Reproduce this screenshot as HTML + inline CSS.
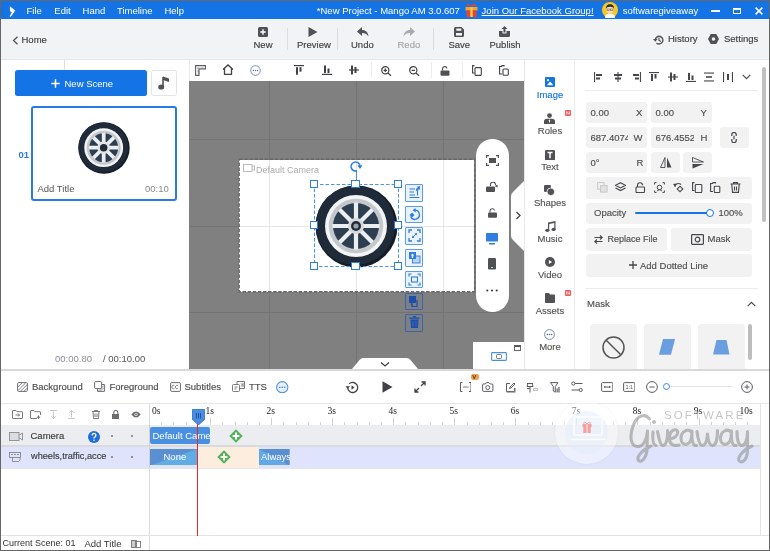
<!DOCTYPE html>
<html><head><meta charset="utf-8">
<style>
*{box-sizing:border-box;margin:0;padding:0}
html,body{will-change:transform;width:770px;height:551px;overflow:hidden;background:#fff;font-family:"Liberation Sans",sans-serif;}
.a{position:absolute}
#frame{position:absolute;left:0;top:0;width:770px;height:551px;border:1px solid #666}
#title{left:1px;top:1px;width:768px;height:18px;background:#1474e6;color:#fff;font-size:9.5px}
#title .t{position:absolute;top:4px;white-space:nowrap}
#tb{left:1px;top:19px;width:768px;height:41px;background:#f2f3f5;border-bottom:1px solid #e6e7ea}
.tbtn{position:absolute;top:22px;font-size:9.5px;color:#3f3f3f;white-space:nowrap}
.sep{position:absolute;width:1px;background:#dcdde0}
.tbtn,.ft,.tt,.tab{-webkit-text-stroke:0.15px currentColor}
</style></head><body>
<div id="frame"></div>
<!-- title bar -->
<div id="title" class="a">
  <svg class="a" style="left:7.5px;top:4.5px" width="7" height="11" viewBox="0 0 7 11"><path d="M0.8 0.3L6.3 4.6L1.8 10.8L0.6 10.2L2.8 6.3L1 5.2Z" fill="#fff"/></svg>
  <span class="t" style="left:25.5px">File</span>
  <span class="t" style="left:53.3px">Edit</span>
  <span class="t" style="left:81.6px">Hand</span>
  <span class="t" style="left:116px">Timeline</span>
  <span class="t" style="left:163.4px">Help</span>
  <span class="t" style="left:315.8px">*New Project - Mango AM 3.0.607</span>
  <span class="t" style="left:480.6px;text-decoration:underline">Join Our Facebook Group!</span>
  <span class="t" style="left:621.7px">softwaregiveaway</span>
</div>
<!-- title icons -->
<svg class="a" style="left:465px;top:3px" width="13" height="14" viewBox="0 0 13 14"><rect x="0.5" y="4" width="12" height="3.5" fill="#f4a42a"/><rect x="1.5" y="7.5" width="10" height="6.5" fill="#e8452c"/><rect x="5.3" y="4" width="2.4" height="10" fill="#f7c64a"/><path d="M6.5 4C4 0 1.5 1 3 3.5M6.5 4C9 0 11.5 1 10 3.5" fill="none" stroke="#e8452c" stroke-width="1.2"/></svg>
<svg class="a" style="left:601.5px;top:2px" width="16" height="16" viewBox="0 0 16 16"><circle cx="8" cy="8" r="8" fill="#f7c81e"/><path d="M3 16Q3 11.5 8 11.5Q13 11.5 13 16Z" fill="#fff"/><ellipse cx="8" cy="7.5" rx="3.6" ry="4" fill="#fbd9b5"/><path d="M4 6.5Q4 2.2 8 2.2Q12 2.2 12 6.5Q11 4.5 8 4.8Q5 4.5 4 6.5Z" fill="#2a2a2a"/><rect x="5" y="7" width="2.4" height="1.6" fill="none" stroke="#555" stroke-width="0.5"/><rect x="8.6" y="7" width="2.4" height="1.6" fill="none" stroke="#555" stroke-width="0.5"/></svg>
<div class="a" style="left:711px;top:10px;width:8.5px;height:1.6px;background:#fff"></div>
<div class="a" style="left:733px;top:7.5px;width:7.5px;height:6px;border:1.4px solid #fff;border-top-width:2px"></div>
<svg class="a" style="left:754.5px;top:7px" width="8" height="8" viewBox="0 0 8 8"><path d="M0.6 0.6L7.4 7.4M7.4 0.6L0.6 7.4" stroke="#fff" stroke-width="1.5"/></svg>
<!-- toolbar -->
<div id="tb" class="a"></div>
<!-- toolbar content -->
<svg class="a" style="left:12px;top:36px" width="7" height="9" viewBox="0 0 7 9"><path d="M5.5 0.7 L1.5 4.5 L5.5 8.3" fill="none" stroke="#555" stroke-width="1.3"/></svg>
<span class="tbtn" style="left:21.5px;top:33.5px">Home</span>
<!-- New -->
<svg class="a" style="left:258px;top:27px" width="10" height="10" viewBox="0 0 10 10"><rect x="0" y="0" width="10" height="10" rx="1.5" fill="#4f5154"/><path d="M5 2.3V7.7M2.3 5H7.7" stroke="#fff" stroke-width="1.4"/></svg>
<span class="tbtn" style="left:253.5px;top:38.7px">New</span>
<div class="sep" style="left:287px;top:28px;height:22px"></div>
<svg class="a" style="left:308px;top:27px" width="10" height="10" viewBox="0 0 10 10"><path d="M0.5 0 L9.5 5 L0.5 10Z" fill="#4f5154"/></svg>
<span class="tbtn" style="left:297px;top:38.7px">Preview</span>
<div class="sep" style="left:337px;top:28px;height:22px"></div>
<svg class="a" style="left:357px;top:27px" width="12" height="10" viewBox="0 0 12 10"><path d="M5 0 L0 4.5 L5 9 V6 C8 6 10 7 11.5 9.5 C11 5.5 9 3 5 3Z" fill="#4f5154"/></svg>
<span class="tbtn" style="left:351px;top:38.7px">Undo</span>
<svg class="a" style="left:403px;top:27px" width="12" height="10" viewBox="0 0 12 10"><path d="M7 0 L12 4.5 L7 9 V6 C4 6 2 7 0.5 9.5 C1 5.5 3 3 7 3Z" fill="#a9aaad"/></svg>
<span class="tbtn" style="left:397.5px;top:38.7px;color:#a5a6a8">Redo</span>
<div class="sep" style="left:433px;top:28px;height:22px"></div>
<svg class="a" style="left:453.5px;top:27px" width="10" height="10" viewBox="0 0 10 10"><path d="M1.5 0H7.5L10 2.5V8.5A1.5 1.5 0 0 1 8.5 10H1.5A1.5 1.5 0 0 1 0 8.5V1.5A1.5 1.5 0 0 1 1.5 0Z" fill="#4f5154"/><rect x="2.3" y="1.5" width="5" height="2.3" fill="#f2f3f5"/><rect x="2" y="6" width="6" height="2.6" fill="#f2f3f5"/></svg>
<span class="tbtn" style="left:448.5px;top:39.3px">Save</span>
<svg class="a" style="left:499px;top:26px" width="11" height="11" viewBox="0 0 11 11"><path d="M5.5 0 L8.5 3 H6.5 V6.5 H4.5 V3 H2.5Z" fill="#4f5154"/><path d="M0 5 H3.5 V7.5 H7.5 V5 H11 V9.5 A1.5 1.5 0 0 1 9.5 11 H1.5 A1.5 1.5 0 0 1 0 9.5Z" fill="#4f5154"/></svg>
<span class="tbtn" style="left:489.5px;top:38.7px">Publish</span>
<svg class="a" style="left:653px;top:34.5px" width="11" height="10" viewBox="0 0 11 10"><path d="M2.3 5 A3.8 3.8 0 1 1 3.5 7.9" fill="none" stroke="#4f5154" stroke-width="1.4"/><path d="M0 4 L2.3 6.8 L4.6 4Z" fill="#4f5154"/><path d="M6 2.8 V5.3 L7.8 6.6" fill="none" stroke="#4f5154" stroke-width="1.2"/></svg>
<span class="tbtn" style="left:668px;top:33px">History</span>
<svg class="a" style="left:708px;top:34px" width="11" height="10" viewBox="0 0 11 10"><path d="M2.75 0H8.25L11 5L8.25 10H2.75L0 5Z" fill="#4f5154"/><circle cx="5.5" cy="5" r="1.8" fill="#f2f3f5"/></svg>
<span class="tbtn" style="left:724px;top:33px">Settings</span>
<!-- ===== MAIN ===== -->

<!-- left panel -->
<div class="a" style="left:15px;top:70px;width:132px;height:26px;background:#1474e6;border-radius:2.5px"></div>
<svg class="a" style="left:51px;top:79px" width="9" height="9" viewBox="0 0 9 9"><path d="M4.5 0.3V8.7M0.3 4.5H8.7" stroke="#fff" stroke-width="1.5"/></svg>
<span class="a" style="left:64.5px;top:78px;font-size:9.5px;color:#fff;white-space:nowrap">New Scene</span>
<div class="a" style="left:151px;top:70px;width:26px;height:26px;border:1px solid #e3e4e6;border-radius:2.5px;background:#fff"></div>
<svg class="a" style="left:158px;top:76px" width="12" height="14" viewBox="0 0 12 14"><path d="M5 1V10.5" stroke="#505256" stroke-width="1.6"/><path d="M5 0.5 L11 2.5 V6 L5 4Z" fill="#505256"/><ellipse cx="3.2" cy="11" rx="3" ry="2.6" fill="#505256"/></svg>
<span class="a" style="left:18.5px;top:149px;font-size:9.5px;font-weight:bold;color:#2a78e0;white-space:nowrap">01</span>
<div class="a" style="left:31px;top:106px;width:146px;height:95px;border:2px solid #2a7ae6;border-radius:3px;background:#fff"></div>
<svg class="a" style="left:78px;top:121.5px" width="52" height="52" viewBox="-41.5 -41.5 83 83">
   <circle cx="0" cy="0" r="41" fill="#141c25"/>
   <circle cx="-1.2" cy="-1.2" r="39.6" fill="#1f2b38"/>
   <circle cx="-0.5" cy="-0.5" r="31" fill="#f2f4f5"/>
   <circle cx="-0.5" cy="-0.5" r="27.2" fill="#c3c8cc"/>
   <circle cx="-0.5" cy="-0.5" r="23" fill="#2d3e50"/>
   <g stroke="#eceff1" stroke-width="6">
    <path d="M-0.5 -24 V23 M-24 -0.5 H23 M-17 -17 L16 16 M16 -17 L-17 16"/>
   </g>
   <circle cx="-0.5" cy="-0.5" r="10" fill="#e3e6e8"/>
   <circle cx="-0.5" cy="-0.5" r="6" fill="#1f2b38"/>
  </svg>
<span class="a" style="left:37.5px;top:183px;font-size:9.5px;color:#555;white-space:nowrap">Add Title</span>
<span class="a" style="left:145px;top:183px;font-size:9.5px;color:#8a8a8a;white-space:nowrap">00:10</span>
<span class="a" style="left:55px;top:353px;font-size:9.5px;color:#8a8f98;white-space:nowrap">00:00.80</span>
<span class="a" style="left:103px;top:353px;font-size:9.5px;color:#555;white-space:nowrap">/ 00:10.00</span>
<div class="a" style="left:189px;top:60px;width:1px;height:21px;background:#e9e9e9"></div>
<div class="a" style="left:64px;top:60px;width:1px;height:10px;background:#dedede"></div>

<!-- canvas toolbar -->
<div class="a" style="left:190px;top:60px;width:335px;height:21px;background:#fff"></div>
<!-- canvas -->
<div class="a" style="left:189px;top:81px;width:335px;height:288px;background:#808080;overflow:hidden">
  <div class="a" style="left:80px;top:0;width:1px;height:288px;background:#747474"></div>
  <div class="a" style="left:167px;top:0;width:1px;height:288px;background:#747474"></div>
  <div class="a" style="left:254px;top:0;width:1px;height:288px;background:#747474"></div>
  <div class="a" style="left:0;top:57.5px;width:335px;height:1px;background:#747474"></div>
  <div class="a" style="left:0;top:144.5px;width:335px;height:1px;background:#747474"></div>
  <div class="a" style="left:0;top:231px;width:335px;height:1px;background:#747474"></div>
  <!-- camera frame -->
  <div class="a" style="left:50px;top:78.5px;width:235px;height:132.5px;background:#fff;overflow:hidden">
    <div class="a" style="left:30px;top:-2px;width:1px;height:140px;background:#e6e6e6"></div>
    <div class="a" style="left:117px;top:-2px;width:1px;height:140px;background:#e6e6e6"></div>
    <div class="a" style="left:204px;top:-2px;width:1px;height:140px;background:#e6e6e6"></div>
    <div class="a" style="left:-2px;top:66px;width:240px;height:1px;background:#e6e6e6"></div>
  </div>
</div>
<svg class="a" style="left:237.5px;top:158px" width="238" height="135" viewBox="0 0 238 135"><rect x="1.2" y="1.2" width="235.5" height="132.5" fill="none" stroke="#666" stroke-width="1.4" stroke-dasharray="3.5 1.6"/></svg>
<!-- canvas toolbar icons -->
<svg class="a" style="left:194.5px;top:64.5px" width="11" height="11" viewBox="0 0 11 11" fill="none" stroke="#5a5c60" stroke-width="1.1"><path d="M0.6 0.6H10.4V4H4V10.4H0.6Z"/><path d="M3 4V2.4M5 4V2.8M7 4V2.4M9 4V2.8M4 6H2.4M4 8H2.8" stroke-width="0.9"/></svg>
<svg class="a" style="left:222px;top:64px" width="12" height="11" viewBox="0 0 12 11" fill="none" stroke="#3f4145" stroke-width="1.3"><path d="M1 5.5L6 0.9L11 5.5M2.5 4.5V10.3H9.5V4.5"/></svg>
<svg class="a" style="left:249.5px;top:64.5px" width="11" height="11" viewBox="0 0 11 11"><circle cx="5.5" cy="5.5" r="4.8" fill="none" stroke="#7d8db5" stroke-width="1"/><circle cx="3.4" cy="5.5" r="0.7" fill="#5a6ea3"/><circle cx="5.5" cy="5.5" r="0.7" fill="#5a6ea3"/><circle cx="7.6" cy="5.5" r="0.7" fill="#5a6ea3"/></svg>
<svg class="a" style="left:294px;top:65px" width="10" height="10" viewBox="0 0 10 10" fill="#3f4145"><rect x="0" y="0" width="10" height="1.2"/><rect x="2" y="2.2" width="2" height="7.5"/><rect x="5.5" y="2.2" width="2" height="4.5"/></svg>
<svg class="a" style="left:322px;top:65px" width="10" height="10" viewBox="0 0 10 10" fill="#3f4145"><rect x="0" y="8.8" width="10" height="1.2"/><rect x="2" y="0.5" width="2" height="7.5"/><rect x="5.5" y="3.5" width="2" height="4.5"/></svg>
<svg class="a" style="left:349px;top:65px" width="10" height="10" viewBox="0 0 10 10" fill="#3f4145"><rect x="0" y="4.4" width="10" height="1.2"/><rect x="2" y="0.5" width="2" height="9"/><rect x="5.5" y="2" width="2" height="6"/></svg>
<div class="sep" style="left:370.5px;top:62px;height:16px;background:#ececec"></div>
<svg class="a" style="left:381px;top:65.5px" width="11" height="10" viewBox="0 0 11 10" fill="none" stroke="#3f4145" stroke-width="1.2"><circle cx="4.3" cy="4.3" r="3.6"/><path d="M7 7L10 9.8M2.6 4.3H6M4.3 2.6V6"/></svg>
<svg class="a" style="left:408.5px;top:65.5px" width="11" height="10" viewBox="0 0 11 10" fill="none" stroke="#3f4145" stroke-width="1.2"><circle cx="4.3" cy="4.3" r="3.6"/><path d="M7 7L10 9.8M2.6 4.3H6"/></svg>
<div class="sep" style="left:430.5px;top:62px;height:16px;background:#ececec"></div>
<svg class="a" style="left:440px;top:65.5px" width="10" height="10" viewBox="0 0 10 10"><path d="M2.5 4.5V3A2.3 2.3 0 0 1 7 2.3" fill="none" stroke="#4f5154" stroke-width="1.2"/><rect x="0.5" y="4.5" width="9" height="5.2" rx="1" fill="#4f5154"/></svg>
<div class="sep" style="left:461.5px;top:62px;height:16px;background:#ececec"></div>
<svg class="a" style="left:472px;top:65px" width="10" height="11" viewBox="0 0 10 11" fill="none" stroke="#3f4145" stroke-width="1.1"><path d="M2.5 0.6H0.6V8H2.5"/><rect x="3" y="2.6" width="6.3" height="7.8" rx="1"/></svg>
<svg class="a" style="left:499px;top:65px" width="10" height="11" viewBox="0 0 10 11" fill="none" stroke="#3f4145" stroke-width="1.1"><path d="M3 1.5H0.6V9H3M3 1.5V0.6H5V1.5"/><rect x="4" y="4" width="5.3" height="6.3" rx="1"/></svg>
<!-- wheel on canvas -->
<svg class="a" style="left:314.5px;top:184.5px" width="83" height="83" viewBox="-41.5 -41.5 83 83">
   <circle cx="0" cy="0" r="41" fill="#141c25"/>
   <circle cx="-1.2" cy="-1.2" r="39.6" fill="#1f2b38"/>
   <circle cx="-0.5" cy="-0.5" r="31" fill="#f2f4f5"/>
   <circle cx="-0.5" cy="-0.5" r="27.2" fill="#c3c8cc"/>
   <circle cx="-0.5" cy="-0.5" r="23" fill="#2d3e50"/>
   <g stroke="#eceff1" stroke-width="4.2">
    <path d="M-0.5 -24 V23 M-24 -0.5 H23 M-17 -17 L16 16 M16 -17 L-17 16"/>
   </g>
   <circle cx="-0.5" cy="-0.5" r="8" fill="#d5d9dc"/>
   <circle cx="-0.5" cy="-0.5" r="5" fill="#1f2b38"/>
   <circle cx="-0.5" cy="-0.5" r="2.6" fill="#9aa1a7"/>
  </svg>
<!-- selection -->
<svg class="a" style="left:313px;top:183px" width="87" height="85" viewBox="0 0 87 85"><rect x="1.5" y="1.5" width="84" height="82" fill="none" stroke="#4a94ea" stroke-width="1.1" stroke-dasharray="3.5 2"/></svg>
<div class="a" style="left:355.5px;top:170px;width:1px;height:14px;background:#4a90e2"></div>
<svg class="a" style="left:349px;top:160px" width="14" height="13" viewBox="0 0 14 13"><path d="M8.04 10.73A4.5 4.5 0 1 1 10.93 5.72" fill="none" stroke="#2f7de1" stroke-width="1.5"/><path d="M8.4 5.2H13.5L10.95 9Z" fill="#2f7de1"/></svg>
<div class="a" style="left:314.5px;top:184.5px;width:8.5px;height:8.5px;margin:-4.75px 0 0 -4.75px;background:#fff;border:1.6px solid #2f7de1"></div>
<div class="a" style="left:356.0px;top:184.5px;width:8.5px;height:8.5px;margin:-4.75px 0 0 -4.75px;background:#fff;border:1.6px solid #2f7de1"></div>
<div class="a" style="left:398.5px;top:184.5px;width:8.5px;height:8.5px;margin:-4.75px 0 0 -4.75px;background:#fff;border:1.6px solid #2f7de1"></div>
<div class="a" style="left:314.5px;top:225.5px;width:8.5px;height:8.5px;margin:-4.75px 0 0 -4.75px;background:#fff;border:1.6px solid #2f7de1"></div>
<div class="a" style="left:398.5px;top:225.5px;width:8.5px;height:8.5px;margin:-4.75px 0 0 -4.75px;background:#fff;border:1.6px solid #2f7de1"></div>
<div class="a" style="left:314.5px;top:266.5px;width:8.5px;height:8.5px;margin:-4.75px 0 0 -4.75px;background:#fff;border:1.6px solid #2f7de1"></div>
<div class="a" style="left:356.0px;top:266.5px;width:8.5px;height:8.5px;margin:-4.75px 0 0 -4.75px;background:#fff;border:1.6px solid #2f7de1"></div>
<div class="a" style="left:398.5px;top:266.5px;width:8.5px;height:8.5px;margin:-4.75px 0 0 -4.75px;background:#fff;border:1.6px solid #2f7de1"></div>
<div class="a" style="left:405px;top:184.0px;width:18px;height:17.5px;background:#eaf2fd;border:1px solid #5e9be6;border-radius:1px"></div>
<svg class="a" style="left:407.5px;top:186.3px" width="13" height="13" viewBox="0 0 13 13"><path d="M1.5 3H7M1.5 6H6M1.5 9H7M1.5 11.5H11.5" stroke="#2f7de1" stroke-width="1.2"/><path d="M8 4.5L11.5 1L11.5 3.5M11.5 1H9" fill="none" stroke="#2f7de1" stroke-width="1.1"/><path d="M8 2.5L11 2.5L9.5 6Z" fill="#2f7de1"/><path d="M9.5 5V9.5" stroke="#2f7de1" stroke-width="1.1"/></svg>
<div class="a" style="left:405px;top:205.5px;width:18px;height:17.5px;background:#eaf2fd;border:1px solid #5e9be6;border-radius:1px"></div>
<svg class="a" style="left:407.5px;top:207.8px" width="13" height="13" viewBox="0 0 13 13"><path d="M6.5 2.2A4.6 4.6 0 1 1 2.6 8.6" fill="none" stroke="#2f7de1" stroke-width="1.3"/><path d="M7.5 0L4.5 2.3L7.8 4.5Z" fill="#2f7de1"/><path d="M4 4.5L6.5 7L4 9.5L1.5 7Z" fill="#2f7de1"/></svg>
<div class="a" style="left:405px;top:227.0px;width:18px;height:17.5px;background:#eaf2fd;border:1px solid #5e9be6;border-radius:1px"></div>
<svg class="a" style="left:407.5px;top:229.3px" width="13" height="13" viewBox="0 0 13 13"><path d="M1 4V1H4M9 1H12V4M12 9V12H9M4 12H1V9" fill="none" stroke="#2f7de1" stroke-width="1.3"/><path d="M4.5 8.5L8.5 4.5" stroke="#2f7de1" stroke-width="1"/><path d="M9 4L6.5 4.3L8.7 6.5Z M4 9L6.5 8.7L4.3 6.5Z" fill="#2f7de1"/></svg>
<div class="a" style="left:405px;top:249.0px;width:18px;height:17.5px;background:#eaf2fd;border:1px solid #5e9be6;border-radius:1px"></div>
<svg class="a" style="left:407.5px;top:251.3px" width="13" height="13" viewBox="0 0 13 13"><rect x="4.5" y="5" width="7.5" height="7" fill="#b9d3f6" stroke="#2f7de1" stroke-width="0.9"/><rect x="1" y="1" width="7" height="7" fill="#2f7de1"/><path d="M4.5 2.5L2.8 4.5H3.8V7H5.2V4.5H6.2Z" fill="#fff"/></svg>
<div class="a" style="left:405px;top:270.5px;width:18px;height:17.5px;background:#eaf2fd;border:1px solid #5e9be6;border-radius:1px"></div>
<svg class="a" style="left:407.5px;top:272.8px" width="13" height="13" viewBox="0 0 13 13"><path d="M1 3.5V1H3.5M9.5 1H12V3.5M12 9.5V12H9.5M3.5 12H1V9.5" fill="none" stroke="#2f7de1" stroke-width="1.1"/><rect x="3.5" y="4" width="6" height="5" fill="none" stroke="#2f7de1" stroke-width="1.1"/></svg>
<div class="a" style="left:405px;top:292.5px;width:18px;height:17.5px;background:#7a7f88;border:1px solid #3f64a0;border-radius:1px"></div>
<svg class="a" style="left:407.5px;top:294.8px" width="13" height="13" viewBox="0 0 13 13"><rect x="1" y="1" width="7" height="7" fill="#1d4fa8"/><path d="M9 5V11.5H4V9" fill="none" stroke="#1d4fa8" stroke-width="1.2"/><path d="M2.5 9L4.5 7.3V10.7Z" fill="#1d4fa8"/></svg>
<div class="a" style="left:405px;top:314.0px;width:18px;height:17.5px;background:#7a7f88;border:1px solid #3f64a0;border-radius:1px"></div>
<svg class="a" style="left:407.5px;top:316.3px" width="13" height="13" viewBox="0 0 13 13"><rect x="1.5" y="1.5" width="10" height="1.3" fill="#1d4fa8"/><rect x="5" y="0" width="3" height="1.5" fill="#1d4fa8"/><path d="M2.5 3.5H10.5L10 12H3Z" fill="#1d4fa8"/><path d="M5 5V10.5M8 5V10.5" stroke="#5b7fb8" stroke-width="0.6"/></svg>
<div class="a" style="left:476px;top:138.5px;width:33px;height:173.5px;background:#fff;border-radius:16.5px"></div>
<svg class="a" style="left:485.5px;top:154.5px" width="13" height="11" viewBox="0 0 13 11" fill="none" stroke="#4f5154" stroke-width="1.1"><path d="M0.6 3V0.6H3M10 0.6H12.4V3M12.4 8V10.4H10M3 10.4H0.6V8"/><rect x="3" y="3" width="7" height="5" fill="#4f5154" stroke="none"/></svg>
<svg class="a" style="left:486px;top:181.5px" width="12" height="10" viewBox="0 0 12 10"><rect x="0" y="4.5" width="9" height="5.5" rx="1" fill="#4f5154"/><path d="M4.5 4V2.8A2.5 2.5 0 0 1 9.5 2.5L10.6 4" fill="none" stroke="#4f5154" stroke-width="1.1"/><path d="M9 4.5L11.8 3L11.5 5.5Z" fill="#4f5154"/></svg>
<svg class="a" style="left:488px;top:207.5px" width="9" height="10" viewBox="0 0 9 10"><path d="M2 4.5V3A2.3 2.3 0 0 1 6.5 2.4" fill="none" stroke="#4f5154" stroke-width="1.1"/><rect x="0" y="4.5" width="9" height="5.2" rx="1" fill="#4f5154"/></svg>
<svg class="a" style="left:486px;top:232.5px" width="12" height="12" viewBox="0 0 12 12"><rect x="0" y="0" width="12" height="8.5" rx="1" fill="#2f7de1"/><rect x="3" y="10" width="6" height="1.5" fill="#2f7de1"/></svg>
<svg class="a" style="left:488px;top:258px" width="8" height="11.5" viewBox="0 0 8 11.5"><rect x="0" y="0" width="8" height="11.5" rx="1.2" fill="#4f5154"/><rect x="3.3" y="9" width="1.4" height="1" fill="#fff"/></svg>
<svg class="a" style="left:486px;top:289px" width="12" height="3" viewBox="0 0 12 3" fill="#3f4145"><circle cx="1.3" cy="1.5" r="1.1"/><circle cx="6" cy="1.5" r="1.1"/><circle cx="10.7" cy="1.5" r="1.1"/></svg>
<!-- side tab -->
<svg class="a" style="left:511px;top:180px" width="14" height="72" viewBox="0 0 14 72"><path d="M14 0 L14 72 L2 60 Q0 58 0 56 L0 16 Q0 14 2 12 Z" fill="#fff"/><path d="M5.5 32L9 35.5L5.5 39" fill="none" stroke="#3f4145" stroke-width="1.3"/></svg>
<!-- bottom chevron tab -->
<svg class="a" style="left:352px;top:358px" width="66" height="11" viewBox="0 0 66 11"><path d="M0 11 L7.5 2 Q9 0 11.5 0 L54.5 0 Q57 0 58.5 2 L66 11Z" fill="#fff"/><path d="M29 4.5L33 8L37 4.5" fill="none" stroke="#3f4145" stroke-width="1.3"/></svg>
<!-- mini preview -->
<div class="a" style="left:473px;top:342px;width:51px;height:27px;background:#fff"></div>
<svg class="a" style="left:491px;top:351.5px" width="16" height="9" viewBox="0 0 16 9"><rect x="0.6" y="0.6" width="14.8" height="7.8" rx="0.8" fill="none" stroke="#4a90e2" stroke-width="1.1"/><rect x="5.5" y="2.5" width="5" height="4" rx="1" fill="none" stroke="#666" stroke-width="0.9"/></svg>
<svg class="a" style="left:514px;top:345px" width="7" height="6" viewBox="0 0 7 6"><rect x="0.5" y="0.5" width="6" height="5" fill="none" stroke="#555" stroke-width="0.9"/><rect x="0.5" y="0.5" width="6" height="1.5" fill="#555"/></svg>
<!-- default camera label -->
<svg class="a" style="left:242.5px;top:164px" width="12" height="8" viewBox="0 0 12 8" fill="none" stroke="#b4b4b4" stroke-width="0.9"><rect x="0.5" y="0.5" width="8.5" height="7"/><path d="M9 3L11.5 1.5V6.5L9 5"/></svg>
<span class="a" style="left:256px;top:165px;font-size:9px;color:#adadad;white-space:nowrap">Default Camera</span>
<!-- right tabs -->
<div class="a" style="left:524px;top:60px;width:1px;height:310px;background:#e8e8e8"></div>
<div class="a" style="left:574px;top:60px;width:1px;height:310px;background:#ebebeb"></div>
<style>.tab{position:absolute;font-size:9.5px;color:#555;white-space:nowrap;text-align:center;width:50px;left:525px}</style>
<svg class="a" style="left:544.5px;top:77px" width="10" height="10" viewBox="0 0 10 10"><rect width="10" height="10" rx="1" fill="#1474e6"/><circle cx="3" cy="3.2" r="1.1" fill="#fff"/><path d="M1.8 8.3L5.2 4.6L8.3 8.3Z" fill="#fff"/></svg>
<span class="tab" style="top:89px;color:#1474e6">Image</span>
<svg class="a" style="left:544px;top:112.5px" width="11" height="11" viewBox="0 0 11 11"><circle cx="5.5" cy="2.6" r="2.4" fill="#505256"/><path d="M0 11V8.5Q0 5.8 3 5.8H8Q11 5.8 11 8.5V11Z" fill="#505256"/><path d="M5.5 6.2L4.8 7.5L5.5 10.5L6.2 7.5Z" fill="#fff"/></svg>
<div class="a" style="left:565px;top:110px;width:6px;height:6px;background:#f25b5b;border-radius:1px"></div>
<svg class="a" style="left:566px;top:111px" width="4" height="4" viewBox="0 0 4 4"><path d="M0.7 0.3V3.7M3.3 0.3V3.7M0.7 1.2L3.3 2.8" stroke="#fff" stroke-width="0.7" fill="none"/></svg>
<span class="tab" style="top:125px">Roles</span>
<svg class="a" style="left:544.5px;top:149.5px" width="10" height="10.5" viewBox="0 0 10 10.5"><rect width="10" height="10.5" rx="1.2" fill="#505256"/><path d="M2.5 2.6H7.5M5 2.6V8.3" stroke="#fff" stroke-width="1.5"/></svg>
<span class="tab" style="top:161px">Text</span>
<svg class="a" style="left:544px;top:185px" width="11" height="11" viewBox="0 0 11 11"><rect x="0" y="0" width="7" height="7" rx="1.2" fill="#505256"/><circle cx="6.8" cy="6.8" r="3.8" fill="#505256" stroke="#fff" stroke-width="0.8"/></svg>
<span class="tab" style="top:197px">Shapes</span>
<svg class="a" style="left:544.5px;top:221px" width="11" height="11" viewBox="0 0 11 11" fill="#505256"><path d="M3 1.5L10.5 0V8.5H9.3V2L4.2 3V9.5H3Z"/><ellipse cx="2.3" cy="9.3" rx="2.1" ry="1.6"/><ellipse cx="8.6" cy="8.4" rx="2.1" ry="1.6"/></svg>
<span class="tab" style="top:233px">Music</span>
<svg class="a" style="left:544.5px;top:257px" width="10" height="10" viewBox="0 0 10 10"><circle cx="5" cy="5" r="5" fill="#505256"/><path d="M3.9 2.9L7.1 5L3.9 7.1Z" fill="#fff"/></svg>
<span class="tab" style="top:269px">Video</span>
<svg class="a" style="left:544.5px;top:293px" width="10" height="10" viewBox="0 0 10 10" fill="#505256"><path d="M0 1A1 1 0 0 1 1 0H4L5 1.5H9A1 1 0 0 1 10 2.5V9A1 1 0 0 1 9 10H1A1 1 0 0 1 0 9Z"/></svg>
<div class="a" style="left:565px;top:290px;width:6px;height:6px;background:#f25b5b;border-radius:1px"></div>
<svg class="a" style="left:566px;top:291px" width="4" height="4" viewBox="0 0 4 4"><path d="M0.7 0.3V3.7M3.3 0.3V3.7M0.7 1.2L3.3 2.8" stroke="#fff" stroke-width="0.7" fill="none"/></svg>
<span class="tab" style="top:305px">Assets</span>
<svg class="a" style="left:544px;top:328.5px" width="11" height="11" viewBox="0 0 11 11"><circle cx="5.5" cy="5.5" r="4.9" fill="none" stroke="#6a7fb0" stroke-width="0.9"/><circle cx="3.4" cy="5.5" r="0.75" fill="#50628f"/><circle cx="5.5" cy="5.5" r="0.75" fill="#50628f"/><circle cx="7.6" cy="5.5" r="0.75" fill="#50628f"/></svg>
<span class="tab" style="top:341px">More</span>
<!-- properties -->
<style>.fld{position:absolute;background:#f2f2f2;border-radius:3px}.ft{position:absolute;font-size:9.5px;color:#4f4f4f;white-space:nowrap}</style>
<svg class="a" style="left:593.5px;top:72px" width="10" height="10" viewBox="0 0 10 10" fill="#45474b"><rect x="0" y="0" width="1.1" height="10" /><rect x="2" y="2" width="6" height="2"/><rect x="2" y="5.5" width="4" height="2"/></svg>
<svg class="a" style="left:612.5px;top:72px" width="10" height="10" viewBox="0 0 10 10" fill="#45474b"><rect x="4.45" y="0" width="1.1" height="10"/><rect x="1" y="2" width="8" height="2"/><rect x="2" y="5.5" width="6" height="2"/></svg>
<svg class="a" style="left:630.5px;top:72px" width="10" height="10" viewBox="0 0 10 10" fill="#45474b"><rect x="8.9" y="0" width="1.1" height="10"/><rect x="2" y="2" width="6" height="2"/><rect x="4" y="5.5" width="4" height="2"/></svg>
<svg class="a" style="left:649.0px;top:72px" width="10" height="10" viewBox="0 0 10 10" fill="#45474b"><rect x="0" y="0" width="10" height="1.1"/><rect x="2" y="2" width="2" height="7"/><rect x="5.5" y="2" width="2" height="4.5"/></svg>
<svg class="a" style="left:667.5px;top:72px" width="10" height="10" viewBox="0 0 10 10" fill="#45474b"><rect x="0" y="4.45" width="10" height="1.1"/><rect x="2" y="0.5" width="2" height="9"/><rect x="5.5" y="2" width="2" height="6"/></svg>
<svg class="a" style="left:686.0px;top:72px" width="10" height="10" viewBox="0 0 10 10" fill="#45474b"><rect x="0" y="8.9" width="10" height="1.1"/><rect x="2" y="1" width="2" height="7"/><rect x="5.5" y="3.5" width="2" height="4.5"/></svg>
<svg class="a" style="left:703.8px;top:72px" width="10" height="10" viewBox="0 0 10 10" fill="#45474b"><rect x="0" y="0.5" width="10" height="1.1"/><rect x="0" y="8.4" width="10" height="1.1"/><rect x="2" y="4.2" width="6" height="1.6"/></svg>
<svg class="a" style="left:723.0px;top:72px" width="10" height="10" viewBox="0 0 10 10" fill="#45474b"><rect x="0" y="0" width="1.1" height="10"/><rect x="8.9" y="0" width="1.1" height="10"/><rect x="4" y="2" width="2" height="6"/></svg>
<svg class="a" style="left:741.5px;top:74px" width="9" height="6" viewBox="0 0 9 6"><path d="M0.7 0.8L4.5 4.6L8.3 0.8" fill="none" stroke="#45474b" stroke-width="1.1"/></svg>
<div class="a" style="left:585px;top:90px;width:173px;height:1px;background:#ececec"></div>
<div class="a" style="left:761.5px;top:67px;width:4.5px;height:155px;background:#c1c1c1;border-radius:2px"></div>
<div class="fld" style="left:586px;top:101.5px;width:60.5px;height:21px"></div>
<div class="fld" style="left:651px;top:101.5px;width:61px;height:21px"></div>
<div class="fld" style="left:586px;top:127px;width:60.5px;height:20.5px"></div>
<div class="fld" style="left:651px;top:127px;width:61px;height:20.5px"></div>
<div class="fld" style="left:719.5px;top:127px;width:29px;height:20.5px"></div>
<div class="fld" style="left:586px;top:152px;width:60.5px;height:21px"></div>
<div class="fld" style="left:651px;top:152px;width:29px;height:21px"></div>
<div class="fld" style="left:683px;top:152px;width:29px;height:21px"></div>
<div class="fld" style="left:586px;top:177px;width:165.5px;height:21.5px"></div>
<div class="fld" style="left:586px;top:202.5px;width:165.5px;height:21px"></div>
<div class="fld" style="left:586px;top:228px;width:81px;height:22.5px"></div>
<div class="fld" style="left:671px;top:228px;width:80.5px;height:22.5px"></div>
<div class="fld" style="left:586px;top:254px;width:165.5px;height:23px"></div>
<span class="ft" style="left:590.5px;top:107px">0.00</span>
<span class="ft" style="left:636px;top:107px">X</span>
<span class="ft" style="left:655.5px;top:107px">0.00</span>
<span class="ft" style="left:700.5px;top:107px">Y</span>
<div class="a" style="left:590.5px;top:132px;width:37px;height:14px;overflow:hidden"><span class="ft" style="left:0;top:0">687.4074</span></div>
<span class="ft" style="left:633.5px;top:132px">W</span>
<div class="a" style="left:655.5px;top:132px;width:38px;height:14px;overflow:hidden"><span class="ft" style="left:0;top:0">676.4552</span></div>
<span class="ft" style="left:700.5px;top:132px">H</span>
<svg class="a" style="left:730.5px;top:131.5px" width="6" height="11" viewBox="0 0 6 11" fill="none" stroke="#45474b" stroke-width="1.2"><path d="M0.8 4V2.6A2.2 2.2 0 0 1 5.2 2.6V4M0.8 7V8.4A2.2 2.2 0 0 0 5.2 8.4V7M3 3.8V7.2"/></svg>
<span class="ft" style="left:590.5px;top:157px">0°</span>
<span class="ft" style="left:636.5px;top:156.5px">R</span>
<svg class="a" style="left:660px;top:156.5px" width="12" height="11" viewBox="0 0 12 11"><path d="M5 0.5V10.5H0.5Z" fill="none" stroke="#45474b" stroke-width="0.9"/><path d="M7 0.5V10.5H11.5Z" fill="#45474b"/></svg>
<svg class="a" style="left:691.5px;top:156.5px" width="12" height="12" viewBox="0 0 12 12"><path d="M0.5 5L11.5 5L0.5 0.5Z" fill="none" stroke="#45474b" stroke-width="0.9"/><path d="M0.5 7L11.5 7L0.5 11.5Z" fill="#45474b"/></svg>
<svg class="a" style="left:596.7px;top:181.5px" width="11" height="11" viewBox="0 0 11 11"><rect x="0.6" y="0.6" width="6.5" height="6.5" fill="none" stroke="#c8c8c8" stroke-width="1"/><rect x="3.6" y="3.6" width="6.5" height="6.5" fill="#e2e2e2" stroke="#c8c8c8" stroke-width="1"/></svg>
<svg class="a" style="left:615.2px;top:181.5px" width="11" height="11" viewBox="0 0 11 11"><path d="M5.5 0.7L10.5 3.3L5.5 5.9L0.5 3.3Z M0.5 6L5.5 8.6L10.5 6" fill="none" stroke="#45474b" stroke-width="1.1"/></svg>
<svg class="a" style="left:634.9px;top:181.5px" width="11" height="11" viewBox="0 0 11 11"><path d="M2.5 5V3.3A2.5 2.5 0 0 1 7.5 3.3" fill="none" stroke="#45474b" stroke-width="1.1"/><rect x="1" y="5" width="8.5" height="5.5" rx="0.8" fill="none" stroke="#45474b" stroke-width="1.1"/></svg>
<svg class="a" style="left:653.5px;top:181.5px" width="11" height="11" viewBox="0 0 11 11"><path d="M0.6 2.5V0.6H2.5M8.5 0.6H10.4V2.5M10.4 8.5V10.4H8.5M2.5 10.4H0.6V8.5" fill="none" stroke="#45474b" stroke-width="1"/><circle cx="5.5" cy="5.5" r="2.3" fill="none" stroke="#45474b" stroke-width="1"/><path d="M3 9L5.5 7.5L8 9" fill="none" stroke="#45474b" stroke-width="0.9"/></svg>
<svg class="a" style="left:672.7px;top:181.5px" width="11" height="11" viewBox="0 0 11 11"><path d="M1.5 4.5A4 4 0 0 1 8 2.5" fill="none" stroke="#45474b" stroke-width="1.1"/><path d="M0 2L2.5 5L3.5 1.5Z" fill="#45474b"/><rect x="5" y="5" width="4" height="4" transform="rotate(45 7 7)" fill="none" stroke="#45474b" stroke-width="1.1"/></svg>
<svg class="a" style="left:691.7px;top:181.5px" width="11" height="11" viewBox="0 0 11 11"><path d="M2.5 0.6H0.6V8.5H2.5" fill="none" stroke="#45474b" stroke-width="1.1"/><rect x="3.3" y="2.5" width="6.5" height="8" rx="0.8" fill="none" stroke="#45474b" stroke-width="1.1"/></svg>
<svg class="a" style="left:710.2px;top:181.5px" width="11" height="11" viewBox="0 0 11 11"><path d="M3 1.5H0.6V9.5H3M3 1.5V0.6H5.5V1.5" fill="none" stroke="#45474b" stroke-width="1.1"/><rect x="4.3" y="4.3" width="5.5" height="6.2" rx="0.8" fill="none" stroke="#45474b" stroke-width="1.1"/></svg>
<svg class="a" style="left:729.5px;top:181.5px" width="11" height="11" viewBox="0 0 11 11"><path d="M0.5 2H10.5M3.5 2V0.6H7.5V2M1.8 2.5L2.5 10.4H8.5L9.2 2.5M4.5 4.5V8.5M6.5 4.5V8.5" fill="none" stroke="#45474b" stroke-width="1.1"/></svg>
<span class="ft" style="left:594px;top:207px">Opacity</span>
<div class="a" style="left:634.5px;top:212px;width:75px;height:2px;background:#1474e6;border-radius:1px"></div>
<div class="a" style="left:705.5px;top:209px;width:8px;height:8px;border:1.3px solid #1474e6;border-radius:50%;background:#fff"></div>
<span class="ft" style="left:718.5px;top:207px">100%</span>
<svg class="a" style="left:593.5px;top:234.5px" width="9" height="9" viewBox="0 0 9 9" fill="none" stroke="#45474b" stroke-width="1.1"><path d="M0.5 2.5H8M6 0.5L8.3 2.5L6 4.5M8.5 6.5H1M3 4.5L0.7 6.5L3 8.5"/></svg>
<span class="ft" style="left:607.5px;top:234px;font-size:9px">Replace File</span>
<svg class="a" style="left:690.5px;top:233.5px" width="13" height="11" viewBox="0 0 13 11"><rect x="0.6" y="0.6" width="11.8" height="9.8" rx="0.8" fill="none" stroke="#45474b" stroke-width="1.2"/><circle cx="6.5" cy="5.5" r="2.3" fill="none" stroke="#45474b" stroke-width="1.2"/></svg>
<span class="ft" style="left:707.5px;top:232.5px">Mask</span>
<svg class="a" style="left:628.5px;top:261px" width="8" height="8" viewBox="0 0 8 8"><path d="M4 0V8M0 4H8" stroke="#45474b" stroke-width="1.3"/></svg>
<span class="ft" style="left:640px;top:260px">Add Dotted Line</span>
<div class="a" style="left:585px;top:288px;width:173px;height:1px;background:#ececec"></div>
<span class="ft" style="left:587px;top:298px">Mask</span>
<svg class="a" style="left:746.5px;top:301px" width="9" height="6" viewBox="0 0 9 6"><path d="M0.7 5.2L4.5 1.4L8.3 5.2" fill="none" stroke="#45474b" stroke-width="1.1"/></svg>
<div class="a" style="left:589.5px;top:324px;width:47px;height:46px;background:#f2f2f2;border-radius:3px 3px 0 0"></div>
<div class="a" style="left:643.5px;top:324px;width:47px;height:46px;background:#f2f2f2;border-radius:3px 3px 0 0"></div>
<div class="a" style="left:698px;top:324px;width:47px;height:46px;background:#f2f2f2;border-radius:3px 3px 0 0"></div>
<svg class="a" style="left:601.5px;top:336px" width="23" height="23" viewBox="0 0 23 23" fill="none" stroke="#555" stroke-width="1.5"><circle cx="11.5" cy="11.5" r="10.5"/><path d="M4.2 4.2L18.8 18.8"/></svg>
<svg class="a" style="left:659px;top:339px" width="16" height="16" viewBox="0 0 16 16"><path d="M4 0H16L12 15.8H0Z" fill="#6a9ee0"/></svg>
<svg class="a" style="left:713px;top:340px" width="17" height="15" viewBox="0 0 17 15"><path d="M3.5 0H13.5L16.5 14.5H0Z" fill="#6a9ee0"/></svg>
<div class="a" style="left:747.5px;top:324px;width:4px;height:35.5px;background:#bdbdbd;border-radius:2px"></div>
<!-- ===== TIMELINE ===== -->
<div class="a" style="left:1px;top:369px;width:768px;height:1.5px;background:#d9d9d9"></div>
<div class="a" style="left:1px;top:403px;width:768px;height:1px;background:#e6e6e6"></div>
<style>.tt{position:absolute;font-size:9.5px;color:#4f4f4f;white-space:nowrap}</style>
<svg class="a" style="left:17px;top:381.5px" width="11" height="10" viewBox="0 0 11 10"><rect x="0.6" y="0.6" width="9.8" height="8.8" rx="1" fill="none" stroke="#6a6c70" stroke-width="1"/><path d="M1 5L5 1M1 8.5L8.5 1M3.5 9.2L10 2.8M7 9.2L10 6.2" stroke="#6a6c70" stroke-width="0.8"/></svg>
<span class="tt" style="left:32px;top:381px">Background</span>
<svg class="a" style="left:94px;top:381px" width="11" height="11" viewBox="0 0 11 11"><rect x="0.6" y="0.6" width="7" height="7" rx="1.2" fill="none" stroke="#6a6c70" stroke-width="1"/><path d="M8 3.5H10.4V10.4H3.5V8" fill="none" stroke="#6a6c70" stroke-width="1"/><path d="M4.5 10L10 4.5M6.5 10L10 6.5" stroke="#6a6c70" stroke-width="0.7"/></svg>
<span class="tt" style="left:109.5px;top:381px">Foreground</span>
<svg class="a" style="left:170px;top:381.5px" width="11" height="10" viewBox="0 0 11 10"><rect x="0.6" y="0.6" width="9.8" height="8.8" rx="1.2" fill="none" stroke="#6a6c70" stroke-width="1"/><path d="M4.3 3.5A1.7 1.7 0 1 0 4.3 6.5M7.8 3.5A1.7 1.7 0 1 0 7.8 6.5" fill="none" stroke="#6a6c70" stroke-width="0.9"/></svg>
<span class="tt" style="left:184.5px;top:381px">Subtitles</span>
<svg class="a" style="left:232px;top:381px" width="13" height="11" viewBox="0 0 13 11" fill="none" stroke="#6a6c70" stroke-width="0.9"><rect x="0.5" y="3.5" width="7" height="7" rx="1"/><path d="M5 3.5V0.5H12.5V7.5H7.5M2.5 6H5.5M2.5 8H4.5M9 2.5L10.5 4L9 5.5M11 2V6"/></svg>
<span class="tt" style="left:249px;top:381px">TTS</span>
<svg class="a" style="left:276px;top:380.5px" width="12.5" height="12.5" viewBox="0 0 12 12"><circle cx="6" cy="6" r="5.4" fill="#e9f1fd" stroke="#4a90e2" stroke-width="1"/><circle cx="3.7" cy="6" r="0.75" fill="#2f7de1"/><circle cx="6" cy="6" r="0.75" fill="#2f7de1"/><circle cx="8.3" cy="6" r="0.75" fill="#2f7de1"/></svg>
<svg class="a" style="left:344.5px;top:380.5px" width="14" height="13" viewBox="0 0 14 13"><path d="M2.7 6.5A5 5 0 1 0 4.2 2.9" fill="none" stroke="#3f4145" stroke-width="1.3"/><path d="M0.5 5.2L2.7 8L5 5.2Z" fill="#3f4145"/><path d="M6.5 4.3L9.5 6.5L6.5 8.7Z" fill="#3f4145"/></svg>
<svg class="a" style="left:382px;top:381px" width="11" height="12" viewBox="0 0 11 12"><path d="M0.5 0.3L10.5 6L0.5 11.7Z" fill="#3f4145"/></svg>
<svg class="a" style="left:413.5px;top:381px" width="12" height="12" viewBox="0 0 12 12" fill="none" stroke="#3f4145" stroke-width="1.3"><path d="M7 5L11 1M7.5 1H11V4.5M5 7L1 11M1 7.5V11H4.5"/></svg>
<svg class="a" style="left:459.5px;top:382px" width="11.5" height="10" viewBox="0 0 11.5 10" fill="none" stroke="#5a5c60" stroke-width="1"><path d="M2.5 0.5H0.5V9.5H2.5M9 0.5H11V9.5H9"/><path d="M4 5H7.5" stroke-width="0.8"/><circle cx="3.5" cy="5" r="0.6" fill="#5a5c60" stroke="none"/><circle cx="8" cy="5" r="0.6" fill="#5a5c60" stroke="none"/></svg>
<div class="a" style="left:470.5px;top:374px;width:8.5px;height:6px;background:#f0a152;border-radius:2px"></div>
<span class="a" style="left:472.3px;top:373.5px;font-size:6px;font-weight:bold;color:#5a3310">V</span>
<svg class="a" style="left:482px;top:382px" width="11.5" height="10" viewBox="0 0 11.5 10" fill="none" stroke="#5a5c60" stroke-width="1"><path d="M0.6 3A1 1 0 0 1 1.6 2H3.3L4.5 0.6H7L8.2 2H9.9A1 1 0 0 1 10.9 3V8.4A1 1 0 0 1 9.9 9.4H1.6A1 1 0 0 1 0.6 8.4Z"/><circle cx="5.75" cy="5.6" r="2"/></svg>
<svg class="a" style="left:504.5px;top:381.5px" width="11" height="11" viewBox="0 0 11 11" fill="none" stroke="#5a5c60" stroke-width="1"><path d="M5 1.5H1.5V9.5H9.5V6"/><path d="M4.5 6.5L5 5L9 1L10 2L6 6Z"/><path d="M1.5 10.3H10.3V6" stroke="#a0a0a0"/></svg>
<svg class="a" style="left:526px;top:381.5px" width="12" height="11" viewBox="0 0 12 11" fill="none" stroke="#5a5c60" stroke-width="1"><path d="M1 1.5H7M2 1.5L1 4.5H7L6 1.5M4 4.5V10.5M1 6.5H4"/><path d="M7.5 6.5H11.5V8.5H7.5Z" stroke="#bdbdbd"/></svg>
<svg class="a" style="left:549.5px;top:381.5px" width="10" height="11" viewBox="0 0 10 11" fill="none" stroke="#5a5c60" stroke-width="1"><path d="M0.5 0.6H8L5.3 4.5V10.2L3.3 9V4.5Z"/><path d="M7.2 6.5V10.5M9 5V10.5" stroke-width="1.2"/></svg>
<svg class="a" style="left:571px;top:381px" width="12" height="12" viewBox="0 0 12 12" fill="none" stroke="#5a5c60" stroke-width="1"><path d="M4 2.5H11.5M0.5 9H8"/><circle cx="2.3" cy="2.5" r="1.6"/><circle cx="9.7" cy="9" r="1.6"/></svg>
<svg class="a" style="left:600.5px;top:381.5px" width="12.5" height="10" viewBox="0 0 12.5 10" fill="none" stroke="#5a5c60" stroke-width="1"><rect x="0.6" y="0.6" width="11.3" height="8.8" rx="1"/><path d="M3 5H9.5"/><path d="M2.8 5L4.3 3.8V6.2Z M9.7 5L8.2 3.8V6.2Z" fill="#5a5c60" stroke="none"/></svg>
<svg class="a" style="left:622.5px;top:381.5px" width="12.5" height="10" viewBox="0 0 12.5 10"><rect x="0.6" y="0.6" width="11.3" height="8.8" rx="1" fill="none" stroke="#5a5c60" stroke-width="1"/><text x="6.25" y="7.2" font-size="5.5" text-anchor="middle" fill="#5a5c60" font-family="Liberation Sans">1:1</text></svg>
<svg class="a" style="left:645.5px;top:380.5px" width="12" height="12" viewBox="0 0 12 12" fill="none" stroke="#5a5c60" stroke-width="1"><circle cx="6" cy="6" r="5.4"/><path d="M3.5 6H8.5"/></svg>
<div class="a" style="left:666px;top:385.5px;width:65.5px;height:1.5px;background:#e3e3e3"></div>
<div class="a" style="left:662.8px;top:382.8px;width:7px;height:7px;border:1.2px solid #3b8ae6;border-radius:50%;background:#fff"></div>
<svg class="a" style="left:741px;top:380.5px" width="12" height="12" viewBox="0 0 12 12" fill="none" stroke="#5a5c60" stroke-width="1"><circle cx="6" cy="6" r="5.4"/><path d="M3.5 6H8.5M6 3.5V8.5"/></svg>
<!-- timeline body -->
<div class="a" style="left:149px;top:404px;width:1px;height:146px;background:#dcdcdc"></div>
<div class="a" style="left:1px;top:425px;width:759px;height:21px;background:#ecedf0"></div>
<div class="a" style="left:1px;top:445px;width:759px;height:1.5px;background:#d9dadd"></div>
<div class="a" style="left:1px;top:447px;width:759px;height:20.5px;background:#dfe4fc"></div>
<div class="a" style="left:1px;top:467.5px;width:759px;height:1px;background:#e4e6ea"></div>
<div class="a" style="left:149px;top:425px;width:1px;height:43px;background:#d0d0d0"></div>
<div class="a" style="left:760px;top:404px;width:1px;height:146px;background:#e3e3e3"></div>
<div class="a" style="left:1px;top:535px;width:768px;height:1px;background:#e3e3e3"></div>
<div class="a" style="left:1px;top:536px;width:768px;height:14px;background:#fff"></div>
<div class="a" style="left:149px;top:536px;width:1px;height:14px;background:#dcdcdc"></div>
<!-- header icons -->
<svg class="a" style="left:11.5px;top:410px" width="11" height="9" viewBox="0 0 11 9" fill="none" stroke="#6a6c70" stroke-width="0.9"><path d="M0.5 1A0.5 0.5 0 0 1 1 0.5H4L5 1.7H10A0.5 0.5 0 0 1 10.5 2.2V8A0.5 0.5 0 0 1 10 8.5H1A0.5 0.5 0 0 1 0.5 8Z"/><path d="M3.5 5H7.5M6 3.5L7.5 5L6 6.5"/></svg>
<svg class="a" style="left:30px;top:410px" width="11" height="9" viewBox="0 0 11 9" fill="none" stroke="#6a6c70" stroke-width="0.9"><path d="M7 8.5H1A0.5 0.5 0 0 1 0.5 8V1A0.5 0.5 0 0 1 1 0.5H4L5 1.7H10A0.5 0.5 0 0 1 10.5 2.2V5"/><path d="M8.5 5.5V8.8M6.8 7.2H10.2" stroke-width="1.1"/></svg>
<svg class="a" style="left:50px;top:410px" width="7" height="9" viewBox="0 0 7 9" fill="none" stroke="#c2c3c6" stroke-width="0.9"><path d="M0 0.5H7M3.5 1.5V8.5M1.3 6.3L3.5 8.5L5.7 6.3"/></svg>
<svg class="a" style="left:68px;top:410px" width="7" height="9" viewBox="0 0 7 9" fill="none" stroke="#c2c3c6" stroke-width="0.9"><path d="M0 8.5H7M3.5 7.5V0.5M1.3 2.7L3.5 0.5L5.7 2.7"/></svg>
<svg class="a" style="left:91.5px;top:410px" width="8" height="9" viewBox="0 0 8 9" fill="none" stroke="#6a6c70" stroke-width="0.9"><path d="M0 1.5H8M2.5 1.5V0.5H5.5V1.5M1 1.5L1.5 8.5H6.5L7 1.5M3 3.5V7M5 3.5V7"/></svg>
<svg class="a" style="left:111.5px;top:410px" width="7.5" height="9" viewBox="0 0 7.5 9"><path d="M1.8 4V2.5A2 2 0 0 1 5.8 2.5V4" fill="none" stroke="#6a6c70" stroke-width="1.1"/><path d="M0 4H7.5V8.5A0.5 0.5 0 0 1 7 9H0.5A0.5 0.5 0 0 1 0 8.5Z" fill="#6a6c70"/></svg>
<svg class="a" style="left:131px;top:411px" width="10" height="7" viewBox="0 0 10 7"><path d="M0.3 3.5Q5 -2.5 9.7 3.5Q5 9.5 0.3 3.5Z" fill="#6a6c70"/><circle cx="5" cy="3.5" r="1.6" fill="#fff"/><circle cx="5" cy="3.5" r="0.9" fill="#6a6c70"/></svg>
<!-- camera row -->
<svg class="a" style="left:8.5px;top:432px" width="14" height="9" viewBox="0 0 14 9"><rect x="0.5" y="0.5" width="9.5" height="8" fill="#dcdde0" stroke="#8a8c90" stroke-width="0.9"/><path d="M10 3.3L13.5 1V8L10 5.7" fill="none" stroke="#8a8c90" stroke-width="0.9"/></svg>
<span class="tt" style="left:30.5px;top:429.5px;color:#3c3c3c">Camera</span>
<svg class="a" style="left:88px;top:430.5px" width="12" height="12" viewBox="0 0 12 12"><circle cx="6" cy="6" r="6" fill="#1f6fd8"/><path d="M4.1 4.5A1.9 1.9 0 1 1 6.8 6.1Q6 6.6 6 7.5" fill="none" stroke="#fff" stroke-width="1.3"/><circle cx="6" cy="9.3" r="0.8" fill="#fff"/></svg>
<div class="a" style="left:111px;top:435px;width:2px;height:2px;border-radius:50%;background:#777"></div>
<div class="a" style="left:131px;top:435px;width:2px;height:2px;border-radius:50%;background:#777"></div>
<!-- wheels row -->
<svg class="a" style="left:9px;top:452px" width="12" height="10" viewBox="0 0 12 10" fill="none" stroke="#7a7c80" stroke-width="0.8"><rect x="0.5" y="0.5" width="11" height="5" /><path d="M2 2.5H4M5 2.5H7M8 2.5H10"/><path d="M3.5 5.5V9.5H9.5L11 8V5.5"/></svg>
<span class="tt" style="left:31px;top:450.5px;color:#3c3c3c;font-size:9.2px">wheels,traffic,acce</span>
<div class="a" style="left:111px;top:456px;width:2px;height:2px;border-radius:50%;background:#777"></div>
<div class="a" style="left:131px;top:456px;width:2px;height:2px;border-radius:50%;background:#777"></div>
<!-- ruler -->
<div class="a" style="left:161.2px;top:421.5px;width:1px;height:3.5px;background:#d2d2d2"></div>
<div class="a" style="left:173.4px;top:421.5px;width:1px;height:3.5px;background:#d2d2d2"></div>
<div class="a" style="left:185.6px;top:421.5px;width:1px;height:3.5px;background:#d2d2d2"></div>
<div class="a" style="left:197.8px;top:421.5px;width:1px;height:3.5px;background:#d2d2d2"></div>
<div class="a" style="left:210.1px;top:418px;width:1px;height:7px;background:#d2d2d2"></div>
<div class="a" style="left:222.3px;top:421.5px;width:1px;height:3.5px;background:#d2d2d2"></div>
<div class="a" style="left:234.5px;top:421.5px;width:1px;height:3.5px;background:#d2d2d2"></div>
<div class="a" style="left:246.7px;top:421.5px;width:1px;height:3.5px;background:#d2d2d2"></div>
<div class="a" style="left:258.9px;top:421.5px;width:1px;height:3.5px;background:#d2d2d2"></div>
<div class="a" style="left:271.1px;top:418px;width:1px;height:7px;background:#d2d2d2"></div>
<div class="a" style="left:283.3px;top:421.5px;width:1px;height:3.5px;background:#d2d2d2"></div>
<div class="a" style="left:295.5px;top:421.5px;width:1px;height:3.5px;background:#d2d2d2"></div>
<div class="a" style="left:307.7px;top:421.5px;width:1px;height:3.5px;background:#d2d2d2"></div>
<div class="a" style="left:319.9px;top:421.5px;width:1px;height:3.5px;background:#d2d2d2"></div>
<div class="a" style="left:332.1px;top:418px;width:1px;height:7px;background:#d2d2d2"></div>
<div class="a" style="left:344.4px;top:421.5px;width:1px;height:3.5px;background:#d2d2d2"></div>
<div class="a" style="left:356.6px;top:421.5px;width:1px;height:3.5px;background:#d2d2d2"></div>
<div class="a" style="left:368.8px;top:421.5px;width:1px;height:3.5px;background:#d2d2d2"></div>
<div class="a" style="left:381.0px;top:421.5px;width:1px;height:3.5px;background:#d2d2d2"></div>
<div class="a" style="left:393.2px;top:418px;width:1px;height:7px;background:#d2d2d2"></div>
<div class="a" style="left:405.4px;top:421.5px;width:1px;height:3.5px;background:#d2d2d2"></div>
<div class="a" style="left:417.6px;top:421.5px;width:1px;height:3.5px;background:#d2d2d2"></div>
<div class="a" style="left:429.8px;top:421.5px;width:1px;height:3.5px;background:#d2d2d2"></div>
<div class="a" style="left:442.0px;top:421.5px;width:1px;height:3.5px;background:#d2d2d2"></div>
<div class="a" style="left:454.2px;top:418px;width:1px;height:7px;background:#d2d2d2"></div>
<div class="a" style="left:466.5px;top:421.5px;width:1px;height:3.5px;background:#d2d2d2"></div>
<div class="a" style="left:478.7px;top:421.5px;width:1px;height:3.5px;background:#d2d2d2"></div>
<div class="a" style="left:490.9px;top:421.5px;width:1px;height:3.5px;background:#d2d2d2"></div>
<div class="a" style="left:503.1px;top:421.5px;width:1px;height:3.5px;background:#d2d2d2"></div>
<div class="a" style="left:515.3px;top:418px;width:1px;height:7px;background:#d2d2d2"></div>
<div class="a" style="left:527.5px;top:421.5px;width:1px;height:3.5px;background:#d2d2d2"></div>
<div class="a" style="left:539.7px;top:421.5px;width:1px;height:3.5px;background:#d2d2d2"></div>
<div class="a" style="left:551.9px;top:421.5px;width:1px;height:3.5px;background:#d2d2d2"></div>
<div class="a" style="left:564.1px;top:421.5px;width:1px;height:3.5px;background:#d2d2d2"></div>
<div class="a" style="left:576.4px;top:418px;width:1px;height:7px;background:#d2d2d2"></div>
<div class="a" style="left:588.6px;top:421.5px;width:1px;height:3.5px;background:#d2d2d2"></div>
<div class="a" style="left:600.8px;top:421.5px;width:1px;height:3.5px;background:#d2d2d2"></div>
<div class="a" style="left:613.0px;top:421.5px;width:1px;height:3.5px;background:#d2d2d2"></div>
<div class="a" style="left:625.2px;top:421.5px;width:1px;height:3.5px;background:#d2d2d2"></div>
<div class="a" style="left:637.4px;top:418px;width:1px;height:7px;background:#d2d2d2"></div>
<div class="a" style="left:649.6px;top:421.5px;width:1px;height:3.5px;background:#d2d2d2"></div>
<div class="a" style="left:661.8px;top:421.5px;width:1px;height:3.5px;background:#d2d2d2"></div>
<div class="a" style="left:674.0px;top:421.5px;width:1px;height:3.5px;background:#d2d2d2"></div>
<div class="a" style="left:686.2px;top:421.5px;width:1px;height:3.5px;background:#d2d2d2"></div>
<div class="a" style="left:698.5px;top:418px;width:1px;height:7px;background:#d2d2d2"></div>
<div class="a" style="left:710.7px;top:421.5px;width:1px;height:3.5px;background:#d2d2d2"></div>
<div class="a" style="left:722.9px;top:421.5px;width:1px;height:3.5px;background:#d2d2d2"></div>
<div class="a" style="left:735.1px;top:421.5px;width:1px;height:3.5px;background:#d2d2d2"></div>
<div class="a" style="left:747.3px;top:421.5px;width:1px;height:3.5px;background:#d2d2d2"></div>
<span class="a" style="left:152.0px;top:405.5px;font-size:9.5px;color:#222;font-family:'Liberation Serif',serif;white-space:nowrap">0s</span>
<span class="a" style="left:205.5px;top:405.5px;font-size:9.5px;color:#222;font-family:'Liberation Serif',serif;white-space:nowrap">1s</span>
<span class="a" style="left:266.5px;top:405.5px;font-size:9.5px;color:#222;font-family:'Liberation Serif',serif;white-space:nowrap">2s</span>
<span class="a" style="left:327.5px;top:405.5px;font-size:9.5px;color:#222;font-family:'Liberation Serif',serif;white-space:nowrap">3s</span>
<span class="a" style="left:388.6px;top:405.5px;font-size:9.5px;color:#222;font-family:'Liberation Serif',serif;white-space:nowrap">4s</span>
<span class="a" style="left:449.6px;top:405.5px;font-size:9.5px;color:#222;font-family:'Liberation Serif',serif;white-space:nowrap">5s</span>
<span class="a" style="left:510.7px;top:405.5px;font-size:9.5px;color:#222;font-family:'Liberation Serif',serif;white-space:nowrap">6s</span>
<span class="a" style="left:571.7px;top:405.5px;font-size:9.5px;color:#222;font-family:'Liberation Serif',serif;white-space:nowrap">7s</span>
<span class="a" style="left:632.8px;top:405.5px;font-size:9.5px;color:#222;font-family:'Liberation Serif',serif;white-space:nowrap">8s</span>
<span class="a" style="left:693.8px;top:405.5px;font-size:9.5px;color:#222;font-family:'Liberation Serif',serif;white-space:nowrap">9s</span>
<span class="a" style="left:739.5px;top:405.5px;font-size:9.5px;color:#222;font-family:'Liberation Serif',serif;white-space:nowrap">10s</span>
<!-- clips -->
<div class="a" style="left:150px;top:427.3px;width:60px;height:17px;background:#4a90e2;border-radius:2px;overflow:hidden"><span class="a" style="left:2.5px;top:2.5px;font-size:9.5px;color:#fff;white-space:nowrap">Default Camera</span></div>
<svg class="a" style="left:229px;top:429px" width="14" height="14" viewBox="0 0 14 14"><path d="M7 0.3L13.7 7L7 13.7L0.3 7Z" fill="#52b257"/><path d="M7 3.6V10.4M3.6 7H10.4" stroke="#fff" stroke-width="2"/></svg>
<svg class="a" style="left:150px;top:448.8px" width="47.5" height="16.5" viewBox="0 0 47.5 16.5" preserveAspectRatio="none"><rect width="47.5" height="16.5" fill="#62ace6"/><path d="M0 0H47.5L0 16.5Z" fill="#5a8fd2"/></svg>
<span class="a" style="left:163.5px;top:451px;font-size:9.5px;color:#fff;white-space:nowrap">None</span>
<div class="a" style="left:197.5px;top:447px;width:61.5px;height:20.5px;background:#fdeddf"></div>
<svg class="a" style="left:217px;top:450.3px" width="14" height="14" viewBox="0 0 14 14"><path d="M7 0.3L13.7 7L7 13.7L0.3 7Z" fill="#52b257"/><path d="M7 3.6V10.4M3.6 7H10.4" stroke="#fff" stroke-width="2"/></svg>
<svg class="a" style="left:259px;top:448.8px" width="30.5" height="16.5" viewBox="0 0 30.5 16.5" preserveAspectRatio="none"><rect width="30.5" height="16.5" fill="#62a8e6"/><path d="M0 0H30.5V16.5Z" fill="#5a8fd2"/></svg>
<div class="a" style="left:259px;top:448.8px;width:30.5px;height:16.5px;overflow:hidden"><span class="a" style="left:2px;top:2.2px;font-size:9.5px;color:#fff;white-space:nowrap">Always</span></div>
<!-- playhead -->
<div class="a" style="left:197px;top:420px;width:1.2px;height:116px;background:#e8262b"></div>
<svg class="a" style="left:191.5px;top:409px" width="13" height="16" viewBox="0 0 13 16"><path d="M1.5 0H11.5A1.5 1.5 0 0 1 13 1.5V10L6.5 16L0 10V1.5A1.5 1.5 0 0 1 1.5 0Z" fill="#4a8de0" stroke="#2f6fc4" stroke-width="0.8"/><path d="M4.5 4V9.5M6.5 4V9.5M8.5 4V9.5" stroke="#1d4f9c" stroke-width="0.9"/></svg>
<!-- watermark -->
<div class="a" style="left:555px;top:400.5px;width:63px;height:63px;border-radius:50%;background:rgba(255,255,255,0.42);box-shadow:0 0 2px rgba(0,0,0,0.08)"></div>
<div class="a" style="left:565px;top:410.5px;width:43px;height:43px;border-radius:50%;background:rgba(225,236,252,0.45)"></div>
<svg class="a" style="left:570px;top:416px" width="36" height="25" viewBox="0 0 36 25" fill="none" stroke="rgba(255,255,255,0.8)" stroke-width="1.5"><rect x="4" y="1" width="28" height="18" rx="1.5"/><path d="M0.5 23.5H35.5"/></svg>
<svg class="a" style="left:582px;top:421px" width="10" height="12" viewBox="0 0 10 12"><rect x="0.5" y="3" width="9" height="3" fill="#f2a0a0"/><rect x="1.3" y="6" width="7.4" height="6" fill="#f2a0a0"/><path d="M5 3V12" stroke="#fff" stroke-width="0.8"/><path d="M5 3C3 0 1 1 2 2.8M5 3C7 0 9 1 8 2.8" fill="none" stroke="#f2a0a0" stroke-width="1"/></svg>
<span class="a" style="left:664px;top:408.5px;font-size:11.5px;letter-spacing:2.1px;color:rgba(150,150,150,0.55);white-space:nowrap">SOFTWARE</span>
<svg class="a" style="left:620px;top:405px;opacity:0.55" width="145" height="65" viewBox="620 405 145 65"><path d="M649.5 419 C646 413.5 637 414 633 426 C629.5 436 630.5 446 637 446.5 C643 447 646.5 440 647.5 431 L647 450 C646 459 641 463 638.5 460.5 C636 457 642 450 651 446 M653 432 C652.5 438 652.5 445 656 445.5 M657.5 431.5 C659 439 660.5 445.5 663 445.5 C666.5 445.5 668 437 667.5 430.5 M668.5 439 C674 439 678.5 435.5 677.5 431.5 C676.5 428 670 429.5 669.5 437.5 C669 444 673 446.5 679 445 M692 432.5 C688 427.5 681 431.5 681 438.5 C681 446 689.5 447 691.5 437.5 L692 431 C691.5 440 692.5 446 696.5 445.5 M697 431.5 C698 439 699.5 445.5 702.5 445.5 C706 445.5 707 440 707.5 434 C708 440 709.5 445.5 712.5 445.5 C716 445.5 717.5 438 717.5 430.5 M731.5 432.5 C727.5 427.5 720.5 431.5 720.5 438.5 C720.5 446 729 447 731 437.5 L731.5 431 C731 440 732 446 736 445.5 M737 431.5 C737 439 738.5 445.5 741.5 445.5 C745.5 445.5 747.5 439 747.5 431.5 L747.5 450 C747.5 459 742.5 464 739.5 461 C736.5 457.5 743 450 752 446" fill="none" stroke="#8a8a8a" stroke-width="3.1" stroke-linecap="round" stroke-linejoin="round"/><circle cx="654" cy="422" r="2.1" fill="#8a8a8a"/></svg>
<!-- status bar -->
<span class="a" style="left:2.5px;top:538px;font-size:9px;color:#333;white-space:nowrap">Current Scene: 01</span>
<span class="a" style="left:84.5px;top:538px;font-size:9.5px;color:#333;white-space:nowrap">Add Title</span>
<svg class="a" style="left:131px;top:540px" width="10" height="8" viewBox="0 0 10 8" fill="none" stroke="#777" stroke-width="0.9"><rect x="0.5" y="0.5" width="5" height="7" fill="#ccc"/><rect x="4.5" y="1.5" width="5" height="6"/></svg>
</body></html>
